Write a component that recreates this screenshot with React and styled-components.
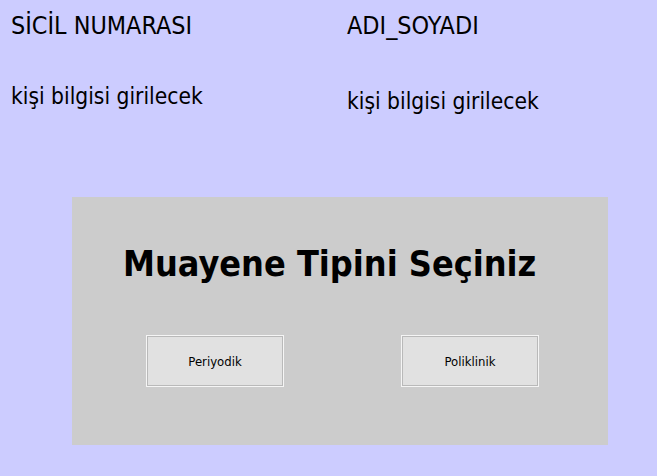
import React from "react";
import styled, { createGlobalStyle } from "styled-components";

const GlobalStyle = createGlobalStyle`
  html, body {
    margin: 0;
    padding: 0;
    background: #ccccff;
  }
  body {
    font-family: "DejaVu Sans Condensed", "DejaVu Sans", sans-serif;
    color: #000;
  }
`;

const Page = styled.div`
  width: 657px;
  height: 476px;
  background: #ccccff;
  overflow: hidden;
`;

const InfoGrid = styled.div`
  display: grid;
  grid-template-columns: 336px 1fr;
  padding: 12px 0 0 11px;
`;

const Label = styled.div`
  font-size: 24.9px;
  line-height: 28px;
  height: 28px;
  white-space: nowrap;
`;

const Value = styled.div`
  font-size: 22.6px;
  line-height: 28px;
  white-space: nowrap;
  margin-top: ${(p) => p.$offset || 42}px;
`;

const Panel = styled.section`
  margin: 82px 0 0 72px;
  width: 536px;
  height: 248px;
  background: #cccccc;
  display: flex;
  flex-direction: column;
  align-items: flex-start;
  padding-left: 51px;
  box-sizing: border-box;
`;

const Title = styled.h1`
  margin: 45px 0 0;
  font-size: 35.7px;
  font-weight: bold;
  line-height: 44px;
  white-space: nowrap;
`;

const ButtonRow = styled.div`
  display: flex;
  gap: 117px;
  margin: 49px 0 0 23px;
`;

const ChoiceButton = styled.button`
  width: 138px;
  height: 52px;
  background: #e1e1e1;
  border: 1px solid #f5f5f5;
  box-shadow: inset 0 0 0 1px #b9b9b9;
  font-family: "DejaVu Sans Condensed", "DejaVu Sans", sans-serif;
  font-size: 13px;
  color: #000;
  padding: 0;
  cursor: pointer;
`;

export default function App() {
  return (
    <Page>
      <GlobalStyle />
      <InfoGrid>
        <div>
          <Label>SİCİL NUMARASI</Label>
          <Value $offset={42}>kişi bilgisi girilecek</Value>
        </div>
        <div>
          <Label>ADI_SOYADI</Label>
          <Value $offset={47}>kişi bilgisi girilecek</Value>
        </div>
      </InfoGrid>
      <Panel>
        <Title>Muayene Tipini Seçiniz</Title>
        <ButtonRow>
          <ChoiceButton>Periyodik</ChoiceButton>
          <ChoiceButton>Poliklinik</ChoiceButton>
        </ButtonRow>
      </Panel>
    </Page>
  );
}
